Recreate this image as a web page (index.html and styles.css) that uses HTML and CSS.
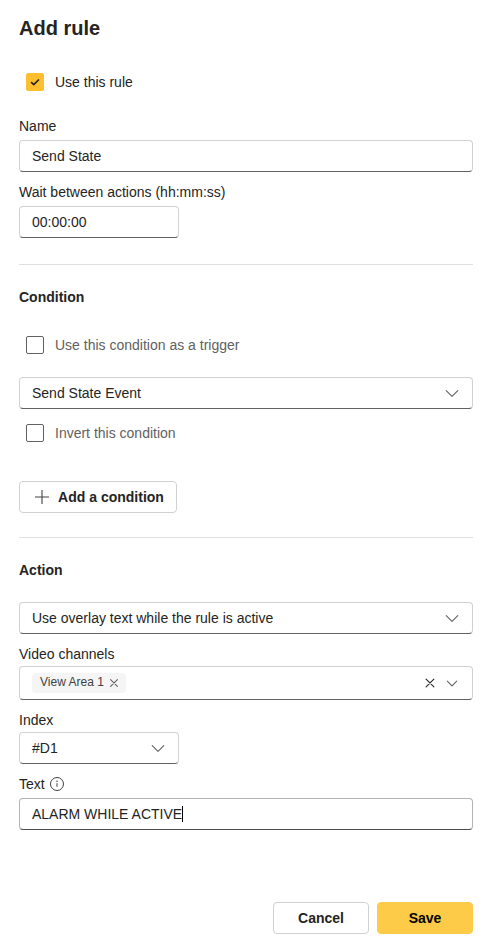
FILE: index.html
```html
<!DOCTYPE html>
<html lang="en">
<head>
<meta charset="utf-8">
<title>Add rule</title>
<link rel="stylesheet" href="styles.css">
</head>
<body>
<main class="panel">
  <h1 class="title">Add rule</h1>
  <div class="check-row use-rule">
    <span class="box checked"><svg width="12" height="12" viewBox="0 0 12 12"><path d="M2.1 6.2 4.8 8.6 9.9 3.5" fill="none" stroke="#242424" stroke-width="1.7"/></svg></span>
    <span>Use this rule</span>
  </div>
  <div class="field name-field">
    <div class="label">Name</div>
    <div class="control">Send State</div>
  </div>
  <div class="field wait-field">
    <div class="label">Wait between actions (hh:mm:ss)</div>
    <div class="control short">00:00:00</div>
  </div>
  <hr class="divider">
  <h2 class="heading">Condition</h2>
  <div class="check-row muted trigger"><span class="box"></span><span>Use this condition as a trigger</span></div>
  <div class="control select">
    <span>Send State Event</span>
    <svg width="16" height="16" viewBox="0 0 16 16"><path class="line" d="M2.2 5.6 8 11.4 13.8 5.6"/></svg>
  </div>
  <div class="check-row muted invert"><span class="box"></span><span>Invert this condition</span></div>
  <button class="button add"><svg width="16" height="16" viewBox="0 0 16 16"><path d="M8 1v14M1 8h14" fill="none" stroke="#424242" stroke-width="1.1"/></svg><span>Add a condition</span></button>
  <hr class="divider">
  <h2 class="heading">Action</h2>
  <div class="control select action-select">
    <span>Use overlay text while the rule is active</span>
    <svg width="16" height="16" viewBox="0 0 16 16"><path class="line" d="M2.2 5.6 8 11.4 13.8 5.6"/></svg>
  </div>
  <div class="field compact">
    <div class="label">Video channels</div>
    <div class="control select channels">
      <span class="tag">View Area 1<svg width="10" height="10" viewBox="0 0 10 10"><path class="line" d="M1.6 1.6 8.4 8.4M8.4 1.6 1.6 8.4"/></svg></span>
      <span class="tools">
        <svg width="12" height="12" viewBox="0 0 12 12"><path class="line dark" d="M2.1 2.1 9.9 9.9M9.9 2.1 2.1 9.9"/></svg>
        <svg width="12" height="12" viewBox="0 0 12 12"><path class="line" d="M1.3 4.2 6 8.9 10.7 4.2"/></svg>
      </span>
    </div>
  </div>
  <div class="field compact">
    <div class="label">Index</div>
    <div class="control select short">
      <span>#D1</span>
      <svg width="16" height="16" viewBox="0 0 16 16"><path class="line" d="M2.2 5.6 8 11.4 13.8 5.6"/></svg>
    </div>
  </div>
  <div class="field text-field">
    <div class="label">Text<svg width="16" height="16" viewBox="0 0 16 16"><circle cx="8" cy="8" r="6.5" fill="none" stroke="#424242"/><path d="M8 7.2v3.6" stroke="#424242"/><circle cx="8" cy="5.3" r=".75" fill="#424242"/></svg></div>
    <div class="control focused">ALARM WHILE ACTIVE<span class="caret"></span></div>
  </div>
  <footer class="actions">
    <button class="button">Cancel</button>
    <button class="button primary">Save</button>
  </footer>
</main>
</body>
</html>
```
FILE: styles.css
```css
* { box-sizing: border-box; }
body {
  margin: 0;
  background: #fff;
  color: #242424;
  font: 14px/20px "Liberation Sans", Arial, sans-serif;
}
.panel { padding: 14px 21px 10px 19px; }
.title { margin: 0; font-size: 20px; line-height: 28px; }
.check-row {
  display: flex;
  align-items: center;
  gap: 11px;
  height: 32px;
  padding-left: 7px;
}
.use-rule { margin-top: 24px; }
.box {
  display: flex;
  align-items: center;
  justify-content: center;
  width: 18px;
  height: 18px;
  border: 1px solid #616161;
  border-radius: 2px;
}
.checked { border-color: #fdbf2d; background: #fdbf2d; }
.muted { color: #616161; }
.name-field { margin-top: 18px; }
.field { margin-bottom: 10px; }
.label { display: flex; align-items: center; gap: 4px; height: 20px; margin-bottom: 4px; }
.compact .label { margin-bottom: 2px; }
.control {
  display: flex;
  align-items: center;
  height: 32px;
  padding: 0 12px;
  border: 1px solid #d1d1d1;
  border-bottom-color: #616161;
  border-radius: 4px;
}
.short { width: 160px; }
.select { justify-content: space-between; }
.line { fill: none; stroke: #616161; stroke-width: 1.1; stroke-linecap: round; stroke-linejoin: round; }
.dark { stroke: #242424; }
.wait-field { margin-bottom: 26px; }
.divider { height: 1px; margin: 0; border: 0; background: #e0e0e0; }
.heading { margin: 22px 0; font-size: 14px; line-height: 20px; }
.trigger { margin-bottom: 16px; }
.invert { margin: 8px 0 32px; }
.button {
  display: flex;
  align-items: center;
  justify-content: center;
  width: 96px;
  height: 32px;
  padding: 0;
  border: 1px solid #d1d1d1;
  border-radius: 4px;
  background: #fff;
  color: #242424;
  font: bold 14px/20px "Liberation Sans", Arial, sans-serif;
}
.add { gap: 8px; width: 158px; margin-bottom: 24px; padding-left: 2px; }
.action-select { margin-bottom: 10px; }
.channels { height: 34px; }
.tag {
  display: flex;
  align-items: center;
  gap: 5px;
  height: 20px;
  padding: 0 7px 2px 8px;
  border-radius: 4px;
  background: #f5f5f5;
  color: #424242;
  font-size: 12px;
  line-height: 16px;
}
.tag svg { margin-top: 2px; }
.tools { display: flex; gap: 10px; margin-right: 2px; }
.focused { border-color: #b3b3b3; border-bottom-color: #4d4d4d; }
.caret { width: 1px; height: 16px; background: #000; }
.text-field { margin-bottom: 72px; }
.actions { display: flex; justify-content: flex-end; gap: 8px; }
.primary { border-color: #fdcb48; background: #fdcb48; color: #000; }
```
